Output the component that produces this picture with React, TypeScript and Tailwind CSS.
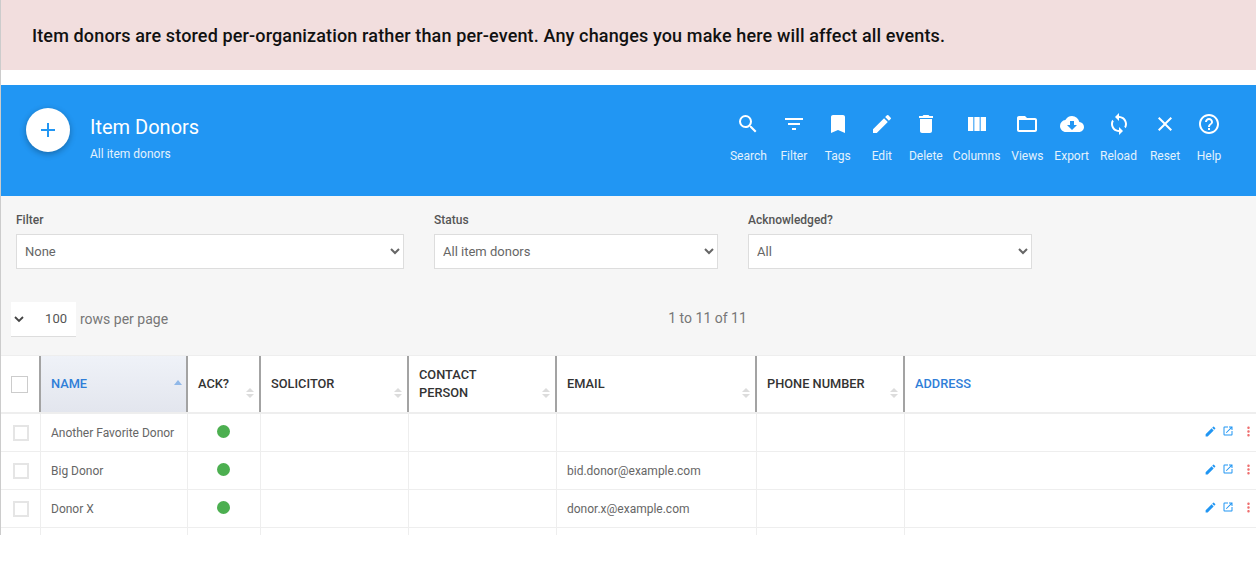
import React from 'react';
import {
  MdAdd,
  MdSearch,
  MdFilterList,
  MdBookmark,
  MdEdit,
  MdDelete,
  MdViewColumn,
  MdFolderOpen,
  MdCloudDownload,
  MdLoop,
  MdClose,
  MdHelpOutline,
  MdOpenInNew,
  MdMoreVert,
} from 'react-icons/md';

const tools = [
  { label: 'Search', Icon: MdSearch, width: 'min-w-[44px]' },
  { label: 'Filter', Icon: MdFilterList, width: 'min-w-[44px]' },
  { label: 'Tags', Icon: MdBookmark, width: 'min-w-[44px]' },
  { label: 'Edit', Icon: MdEdit, width: 'min-w-[44px]' },
  { label: 'Delete', Icon: MdDelete, width: 'min-w-[44px]' },
  { label: 'Columns', Icon: MdViewColumn, width: 'min-w-[44px]' },
  { label: 'Views', Icon: MdFolderOpen, width: 'min-w-[44px]' },
  { label: 'Export', Icon: MdCloudDownload, width: 'min-w-[44px]' },
  { label: 'Reload', Icon: MdLoop, width: 'min-w-[49px]' },
  { label: 'Reset', Icon: MdClose, width: 'min-w-[44px]' },
  { label: 'Help', Icon: MdHelpOutline, width: 'min-w-[44px]' },
];

const rows = [
  { name: 'Another Favorite Donor', email: '' },
  { name: 'Big Donor', email: 'bid.donor@example.com' },
  { name: 'Donor X', email: 'donor.x@example.com' },
];

const rowCols = 'grid grid-cols-[39px_147px_73px_148px_148px_200px_148px_1fr]';
const headCols = 'grid grid-cols-[38px_147px_73px_148px_148px_200px_148px_1fr]';

function SortArrows() {
  return (
    <span className="absolute right-[5px] top-[32px] flex flex-col gap-[2px]">
      <span className="w-0 h-0 border-x-[4px] border-x-transparent border-b-[4px] border-b-[#dcdcdc]" />
      <span className="w-0 h-0 border-x-[4px] border-x-transparent border-t-[4px] border-t-[#dcdcdc]" />
    </span>
  );
}

function HeaderCell({ children, active }: { children: React.ReactNode; active?: boolean }) {
  return (
    <div
      className={`relative flex items-center pl-[10px] pr-4 border-l-2 border-[#a3a3a3] text-[12.8px] leading-[18px] font-medium ${
        active ? 'bg-gradient-to-b from-[#eff2f8] to-[#e3e6ee] text-[#2f7ed8]' : 'text-[#333333]'
      }`}
    >
      {children}
      {active ? (
        <span className="absolute right-[4px] top-[24px] w-0 h-0 border-x-[4px] border-x-transparent border-b-[5px] border-b-[#90b8e8]" />
      ) : (
        <SortArrows />
      )}
    </div>
  );
}

function FilterSelect({ label, value, width }: { label: string; value: string; width: string }) {
  return (
    <div className={width}>
      <div className="text-[12px] leading-[16px] font-medium text-[#555555] mb-[6px]">{label}</div>
      <select className="w-full h-[35px] pl-[4px] bg-white border border-[#dddddd] text-[13px] text-[#666666]">
        <option>{value}</option>
      </select>
    </div>
  );
}

export default function App() {
  return (
    <div className="h-[565px] w-[1256px] bg-white overflow-hidden font-['Roboto',sans-serif]">
      <div className="h-[535px] overflow-hidden border-l border-[#cccccc]">
        <div className="h-[70px] bg-[#f2dede] flex items-center pl-[31px] pt-[1px] text-[18px] tracking-[0.14px] font-medium text-[#111111]">
          Item donors are stored per-organization rather than per-event. Any changes you make here will affect all events.
        </div>

        <div className="mt-[15px] h-[111px] bg-[#2196f3] flex items-start justify-between text-white">
          <div className="flex items-start pl-[25px] pt-[23px]">
            <div className="w-11 h-11 rounded-full bg-white flex items-center justify-center shadow-[0_2px_6px_rgba(0,0,0,0.3)]">
              <MdAdd className="text-[#2196f3] text-[24px]" />
            </div>
            <div className="ml-[20px] mt-[7px]">
              <div className="text-[20px] leading-[24px]">Item Donors</div>
              <div className="text-[12px] leading-[16px] mt-[7px] text-[#e3f2fd]">All item donors</div>
            </div>
          </div>
          <div className="flex items-start pr-[25px] pt-[27px]">
            {tools.map(({ label, Icon, width }) => (
              <div key={label} className={`flex flex-col items-center px-[5px] ${width}`}>
                <Icon className="text-[24px]" />
                <span className="text-[12px] leading-[16px] mt-[12px] text-[#e3f2fd]">{label}</span>
              </div>
            ))}
          </div>
        </div>

        <div className="h-[159px] bg-[#f6f6f6]">
          <div className="flex pt-[16px] pl-[15px]">
            <FilterSelect label="Filter" value="None" width="w-[388px]" />
            <div className="w-[30px]" />
            <FilterSelect label="Status" value="All item donors" width="w-[284px]" />
            <div className="w-[30px]" />
            <FilterSelect label="Acknowledged?" value="All" width="w-[284px]" />
          </div>
          <div className="flex items-center mt-[33px] pl-[10px] h-[35px]">
            <div className="w-[65px] h-[35px] bg-white border-b border-[#dddddd] flex items-center justify-between pl-[2px] pr-[9px] text-[13px] text-[#555555]">
              <svg width="12" height="12" viewBox="0 0 12 12" fill="none" stroke="#444444" strokeWidth="1.8">
                <path d="M2 4l4 4 4-4" />
              </svg>
              100
            </div>
            <span className="ml-[4px] text-[14px] text-[#777777]">rows per page</span>
            <span className="flex-1 text-center text-[14px] text-[#777777] pr-[9px] pb-[2px]">1 to 11 of 11</span>
          </div>
        </div>

        <div className={`${headCols} h-[59px] bg-white border-t border-[#eeeeee] border-b-2 border-b-[#eeeeee]`}>
          <div className="flex items-center pl-[10px]">
            <span className="w-[17px] h-[17px] border border-[#cccccc] bg-white" />
          </div>
          <HeaderCell active>NAME</HeaderCell>
          <HeaderCell>ACK?</HeaderCell>
          <HeaderCell>SOLICITOR</HeaderCell>
          <HeaderCell>
            CONTACT
            <br />
            PERSON
          </HeaderCell>
          <HeaderCell>EMAIL</HeaderCell>
          <HeaderCell>PHONE NUMBER</HeaderCell>
          <div className="border-l-2 border-[#a3a3a3] flex items-center pl-[10px] text-[12.8px] font-medium text-[#2f7ed8]">ADDRESS</div>
        </div>

        {[...rows, null].map((row, i) => (
          <div key={i} className={`${rowCols} h-[38px] border-b border-[#eeeeee] text-[12px] text-[#666666]`}>
            <div className="flex items-center pl-[12px]">
              {row && <span className="w-4 h-4 border-2 border-[#e5e5e5] bg-white" />}
            </div>
            <div className="flex items-center pl-[10px] pt-[1px] border-l border-[#eeeeee]">{row?.name}</div>
            <div className="flex items-center border-l border-[#eeeeee] pl-[29px] pb-[2px]">
              {row && <span className="w-[13px] h-[13px] rounded-full bg-[#4caf50]" />}
            </div>
            <div className="border-l border-[#eeeeee]" />
            <div className="border-l border-[#eeeeee]" />
            <div className="flex items-center pl-[10px] pt-[1px] border-l border-[#eeeeee]">{row?.email}</div>
            <div className="border-l border-[#eeeeee]" />
            <div className="flex items-center justify-end border-l border-[#eeeeee] pb-[3px]">
              {row && (
                <>
                  <MdEdit className="text-[#2196f3] text-[13px]" />
                  <MdOpenInNew className="text-[#2196f3] text-[12px] ml-[5px]" />
                  <MdMoreVert className="text-[#ef7070] text-[15px] ml-[7px]" />
                </>
              )}
            </div>
          </div>
        ))}
      </div>
    </div>
  );
}
